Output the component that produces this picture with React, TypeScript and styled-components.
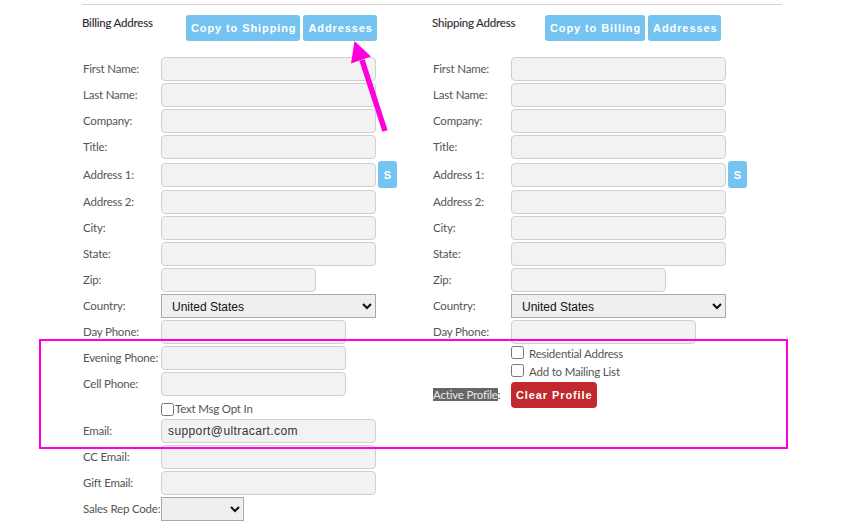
import React from 'react'
import styled, { createGlobalStyle } from 'styled-components'

const GlobalStyle = createGlobalStyle`
    html, body {
        margin: 0;
        padding: 0;
        background: #fff;
    }
    body {
        font-family: Lato, 'Liberation Sans', sans-serif;
        font-size: 11.5px;
        letter-spacing: -0.2px;
        color: #555;
    }
`

const Page = styled.div`
    position: relative;
    width: 848px;
    height: 529px;
    padding-top: 4px;
    box-sizing: border-box;
    overflow: hidden;
`

const Form = styled.div`
    margin-left: 82px;
    width: 700px;
    border-top: 1px solid #d3d3d3;
    display: flex;
`

const Column = styled.section`
    width: 350px;
    display: flex;
    flex-direction: column;
`

const Header = styled.header<{ $titleWidth: number }>`
    display: flex;
    align-items: flex-start;
    padding-top: 10px;
    margin-bottom: 16px;
    h2 {
        width: ${p => p.$titleWidth}px;
        margin: 0;
        font-size: 11.5px;
        line-height: 15px;
        font-weight: 400;
        color: #2a2a2a;
        -webkit-text-stroke: 0.1px #2a2a2a;
    }
`

const ButtonGroup = styled.div`
    display: flex;
    gap: 3px;
`

const Button = styled.button<{ $tone?: 'blue' | 'red' }>`
    height: 26px;
    padding: 0 4px 0 5px;
    border: none;
    border-radius: ${p => (p.$tone === 'red' ? 4 : 3)}px;
    background: ${p => (p.$tone === 'red' ? '#c1292e' : '#74c3f0')};
    color: #fff;
    font-family: 'Liberation Sans', Arial, sans-serif;
    font-size: 11px;
    font-weight: 700;
    letter-spacing: 0.9px;
    cursor: pointer;
`

const SmallButton = styled(Button)`
    width: 19px;
    height: 27px;
    padding: 0;
    margin-left: 2px;
    letter-spacing: 0;
`

const Rows = styled.div`
    display: flex;
    flex-direction: column;
    gap: 2px;
`

const Row = styled.div<{ $height?: number; $top?: boolean }>`
    display: flex;
    align-items: ${p => (p.$top ? 'flex-start' : 'center')};
    min-height: ${p => p.$height ?? 24}px;
`

const Label = styled.label`
    width: 78px;
    flex-shrink: 0;
    padding: 0 0 1px 1px;
    white-space: nowrap;
    line-height: 15px;
    color: #555;
`

const Input = styled.input<{ $width?: number }>`
    box-sizing: border-box;
    width: ${p => p.$width ?? 215}px;
    height: 24px;
    margin: 0;
    padding: 0 6px;
    border: 1px solid #cfcfcf;
    border-radius: 4px;
    background: #f2f2f2;
    font-family: 'Liberation Sans', Arial, sans-serif;
    font-size: 12px;
    letter-spacing: 0.4px;
    color: #333;
    outline: none;
`

const Select = styled.select<{ $width?: number }>`
    box-sizing: border-box;
    width: ${p => p.$width ?? 215}px;
    height: 24px;
    margin: 0;
    padding: 2px 0 0 6px;
    border: 1px solid #a9a9a9;
    border-radius: 0;
    background: #efefef;
    font-family: 'Liberation Sans', Arial, sans-serif;
    font-size: 12px;
    letter-spacing: 0;
    color: #111;
`

const Check = styled.label<{ $gap: number; $center?: boolean; $offset?: number }>`
    display: flex;
    align-items: ${p => (p.$center ? 'center' : 'flex-start')};
    gap: ${p => p.$gap}px;
    margin-top: ${p => p.$offset ?? 0}px;
    line-height: 16px;
    color: #555;
    input {
        width: 13px;
        height: 13px;
        margin: 0;
    }
`

const Marked = styled.span`
    background: #666;
    color: #e8e8e8;
`

const Highlight = styled.div`
    position: absolute;
    left: 39px;
    top: 339px;
    width: 749px;
    height: 110px;
    box-sizing: border-box;
    border: 2px solid #ff00dd;
    pointer-events: none;
`

const Overlay = styled.svg`
    position: absolute;
    left: 0;
    top: 0;
    pointer-events: none;
`

type Side = 'billing' | 'shipping'

const TextRow: React.FC<{ label: string; width?: number; value?: string; extra?: React.ReactNode }> = ({ label, width, value, extra }) => (
    <Row>
        <Label>{label}</Label>
        <Input $width={width} defaultValue={value} />
        {extra}
    </Row>
)

const AddressColumn: React.FC<{ side: Side }> = ({ side }) => {
    const billing = side === 'billing'
    return (
        <Column>
            <Header $titleWidth={billing ? 104 : 113}>
                <h2>{billing ? 'Billing Address' : 'Shipping Address'}</h2>
                <ButtonGroup>
                    <Button>{billing ? 'Copy to Shipping' : 'Copy to Billing'}</Button>
                    <Button>Addresses</Button>
                </ButtonGroup>
            </Header>
            <Rows>
                <TextRow label="First Name:" />
                <TextRow label="Last Name:" />
                <TextRow label="Company:" />
                <TextRow label="Title:" />
                <TextRow label="Address 1:" extra={<SmallButton>S</SmallButton>} />
                <TextRow label="Address 2:" />
                <TextRow label="City:" />
                <TextRow label="State:" />
                <TextRow label="Zip:" width={155} />
                <Row>
                    <Label>Country:</Label>
                    <Select defaultValue="US">
                        <option value="US">United States</option>
                    </Select>
                </Row>
                <TextRow label="Day Phone:" width={185} />
                {billing ? (
                    <>
                        <TextRow label="Evening Phone:" width={185} />
                        <TextRow label="Cell Phone:" width={185} />
                        <Row $height={19}>
                            <Label />
                            <Check $gap={1} $center $offset={3}>
                                <input type="checkbox" />Text Msg Opt In
                            </Check>
                        </Row>
                        <TextRow label="Email:" value="support@ultracart.com" />
                        <TextRow label="CC Email:" />
                        <TextRow label="Gift Email:" />
                        <Row>
                            <Label>Sales Rep Code:</Label>
                            <Select $width={83} defaultValue="">
                                <option value=""></option>
                            </Select>
                        </Row>
                    </>
                ) : (
                    <>
                        <Row $height={16} $top>
                            <Label />
                            <Check $gap={5}><input type="checkbox" />Residential Address</Check>
                        </Row>
                        <Row $height={16} $top>
                            <Label />
                            <Check $gap={5}><input type="checkbox" />Add to Mailing List</Check>
                        </Row>
                        <Row $height={26}>
                            <Label><Marked>Active Profile</Marked>:</Label>
                            <Button $tone="red">Clear Profile</Button>
                        </Row>
                    </>
                )}
            </Rows>
        </Column>
    )
}

const App: React.FC = () => {
    return (
        <Page>
            <GlobalStyle />
            <Form>
                <AddressColumn side="billing" />
                <AddressColumn side="shipping" />
            </Form>
            <Highlight />
            <Overlay width={848} height={529} viewBox="0 0 848 529">
                <line x1={385} y1={131} x2={362} y2={60} stroke="#ff00dd" strokeWidth={5.5} />
                <polygon points="354.5,41 351,63.5 371,56.5" fill="#ff00dd" />
            </Overlay>
        </Page>
    )
}

export default App
